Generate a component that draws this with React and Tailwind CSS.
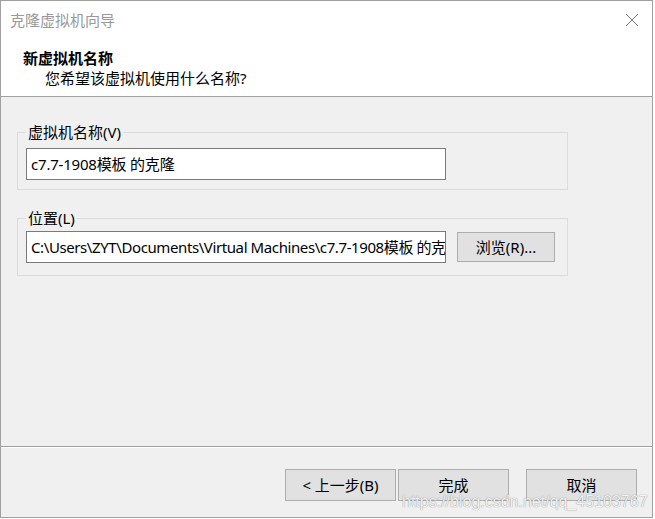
import React from "react";

const font = { fontFamily: '"Noto Sans", "Noto Sans CJK SC", sans-serif' };

function GroupBox({ label, children, className = "" }) {
  return (
    <fieldset className={`ml-[16px] w-[551px] border border-[#dcdcdc] pl-[8px] pr-[8px] ${className}`}>
      <legend className="px-[2px] text-[15px] leading-[20px] text-black">{label}</legend>
      {children}
    </fieldset>
  );
}

function Button({ children, className = "" }) {
  return (
    <button className={`h-[32px] w-[111px] border border-[#adadad] bg-[#e1e1e1] text-[15px] leading-[20px] text-black ${className}`}>
      {children}
    </button>
  );
}

export default function App() {
  return (
    <div className="relative h-[519px] w-[655px] overflow-hidden bg-white" style={font}>
      <div className="flex h-[518px] w-[653px] flex-col border border-[#a0a0a0] bg-white">
        {/* title bar */}
        <div className="flex h-[38px] items-center justify-between pl-[9px] pr-[12px]">
          <span className="text-[15px] leading-[20px] text-[#999]">克隆虚拟机向导</span>
          <svg width="14" height="14" viewBox="0 0 14 14" className="mr-[1px]">
            <path d="M1 1L13 13M13 1L1 13" stroke="#777" strokeWidth="1" />
          </svg>
        </div>

        {/* header */}
        <div className="h-[58px] border-b border-[#a0a0a0] pt-[9px]">
          <div className="pl-[22px] text-[15px] font-bold leading-[20px] text-black">新虚拟机名称</div>
          <div className="pl-[44px] text-[15px] leading-[20px] text-black">您希望该虚拟机使用什么名称?</div>
        </div>

        {/* body */}
        <div className="h-[349px] bg-[#f0f0f0] pt-[25px]">
          <GroupBox label="虚拟机名称(V)" className="pb-[9px]">
            <div className="mt-[6px] flex h-[32px] w-[420px] items-center overflow-hidden border border-[#7a7a7a] bg-white pl-[4px] text-[15px] tracking-[-0.2px] text-black">
              <span className="whitespace-nowrap">c7.7-1908模板 的克隆</span>
            </div>
          </GroupBox>
          <GroupBox label="位置(L)" className="mt-[18px] pb-[12px]">
            <div className="mt-[3px] flex items-center gap-[11px]">
              <div className="flex h-[32px] w-[420px] items-center overflow-hidden border border-[#7a7a7a] bg-white pl-[4px] text-[15px] tracking-[-0.4px] text-black">
                <span className="whitespace-nowrap">C:\Users\ZYT\Documents\Virtual Machines\c7.7-1908模板 的克隆</span>
              </div>
              <button className="h-[30px] w-[98px] border border-[#adadad] bg-[#e1e1e1] text-[15px] leading-[20px] text-black">
                浏览(R)...
              </button>
            </div>
          </GroupBox>
        </div>

        {/* footer */}
        <div className="flex flex-1 items-start justify-end border-t border-[#a0a0a0] bg-[#f0f0f0] pr-[15px] pt-[22px] shadow-[inset_0_1px_0_#ffffff]">
          <Button>&lt; 上一步(B)</Button>
          <Button className="ml-[2px]">完成</Button>
          <Button className="ml-[17px]">取消</Button>
        </div>
      </div>

      {/* watermark */}
      <div
        className="absolute left-[402px] top-[492px] whitespace-nowrap text-[16px] leading-[20px] text-white/90 [text-shadow:0_0_1px_rgba(90,90,90,0.9)]"
        style={{ fontFamily: '"Liberation Sans", Arial, sans-serif' }}
      >
        https://blog.csdn.net/qq_45103767
      </div>
    </div>
  );
}
